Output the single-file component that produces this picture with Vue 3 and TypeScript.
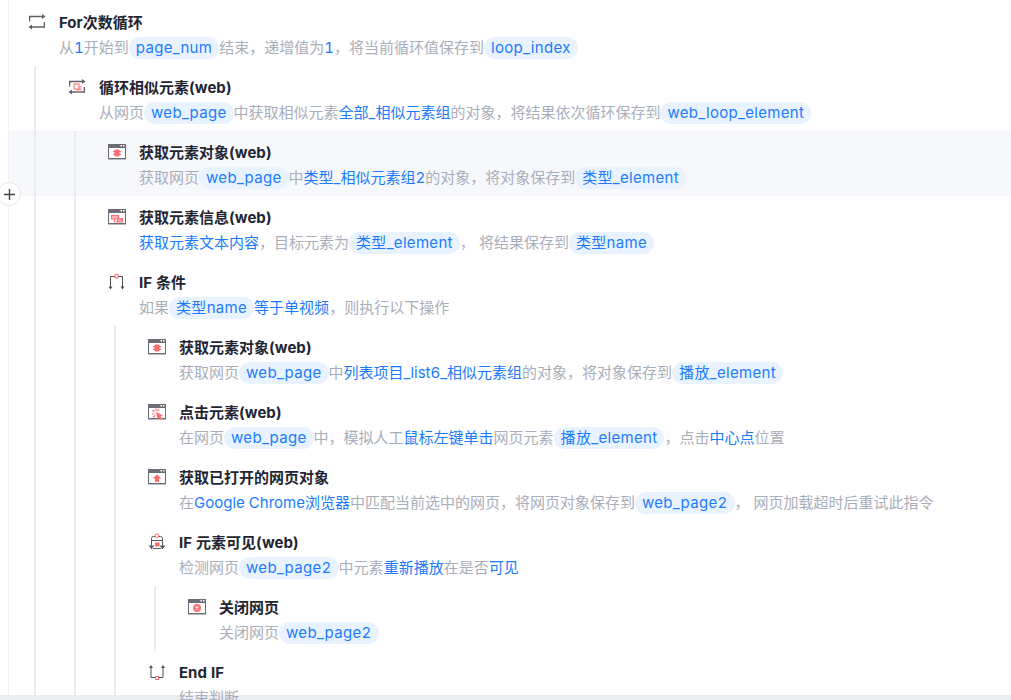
<script setup lang="ts">
// Flow steps of the automation, flattened; depth gives the guide lines.
type Part = { k: 't' | 'b' | 'c'; v: string }
type Row = { depth: number; icon: string; title: string; sub: Part[]; active?: boolean }

const t = (v: string): Part => ({ k: 't', v })
const b = (v: string): Part => ({ k: 'b', v })
const c = (v: string): Part => ({ k: 'c', v })

const rows: Row[] = [
  { depth: 0, icon: 'loop', title: 'For次数循环', sub: [t('从'), b('1'), t('开始到'), c('page_num'), t('结束，递增值为'), b('1'), t('，将当前循环值保存到'), c('loop_index')] },
  { depth: 1, icon: 'loopSimilar', title: '循环相似元素(web)', sub: [t('从网页'), c('web_page'), t('中获取相似元素'), b('全部_相似元素组'), t('的对象，将结果依次循环保存到'), c('web_loop_element')] },
  { depth: 2, icon: 'element', active: true, title: '获取元素对象(web)', sub: [t('获取网页'), c('web_page'), t('中'), b('类型_相似元素组2'), t('的对象，将对象保存到'), c('类型_element')] },
  { depth: 2, icon: 'info', title: '获取元素信息(web)', sub: [b('获取元素文本内容'), t('，目标元素为'), c('类型_element'), t('， 将结果保存到'), c('类型name')] },
  { depth: 2, icon: 'if', title: 'IF 条件', sub: [t('如果'), c('类型name'), b('等于单视频'), t('，则执行以下操作')] },
  { depth: 3, icon: 'element', title: '获取元素对象(web)', sub: [t('获取网页'), c('web_page'), t('中'), b('列表项目_list6_相似元素组'), t('的对象，将对象保存到'), c('播放_element')] },
  { depth: 3, icon: 'click', title: '点击元素(web)', sub: [t('在网页'), c('web_page'), t('中，模拟人工'), b('鼠标左键单击'), t('网页元素'), c('播放_element'), t('，点击'), b('中心点'), t('位置')] },
  { depth: 3, icon: 'page', title: '获取已打开的网页对象', sub: [t('在'), b('Google Chrome浏览器'), t('中匹配当前选中的网页，将网页对象保存到'), c('web_page2'), t('， 网页加载超时后重试此指令')] },
  { depth: 3, icon: 'ifVisible', title: 'IF 元素可见(web)', sub: [t('检测网页'), c('web_page2'), t('中元素'), b('重新播放'), t('在是否'), b('可见')] },
  { depth: 4, icon: 'close', title: '关闭网页', sub: [t('关闭网页'), c('web_page2')] },
  { depth: 3, icon: 'endIf', title: 'End IF', sub: [t('结束判断')] },
]

const windowIcons = ['element', 'info', 'click', 'page', 'close']
</script>

<template>
  <div class="page">
    <div class="flow">
      <div v-for="(row, i) in rows" :key="i" class="row" :class="{ active: row.active }">
        <span v-for="n in row.depth" :key="n" class="guide"></span>
        <svg class="icon" viewBox="0 0 18 18" width="18" height="18" aria-hidden="true">
          <g v-if="windowIcons.includes(row.icon)">
            <rect x="0" y="15.5" width="18" height="1.5" fill="#b9b9c2" />
            <rect x="0.5" y="1.5" width="17" height="14" fill="#fff" stroke="#6c6c76" />
            <rect x="0" y="1" width="18" height="4" fill="#6c6c76" />
            <rect x="12.5" y="2" width="1.5" height="1.5" fill="#fff" />
            <rect x="15" y="2" width="1.5" height="1.5" fill="#fff" />
          </g>
          <g v-if="row.icon === 'element'" fill="#ff6b6e">
            <rect x="6.5" y="6.5" width="5" height="7" rx="1" />
            <rect x="5" y="8" width="8" height="1.2" />
            <rect x="5" y="10.8" width="8" height="1.2" />
          </g>
          <g v-if="row.icon === 'info'" fill="#fdb3b4" stroke="#ff6b6e">
            <rect x="3.5" y="7.5" width="7" height="3.5" />
            <rect x="9.5" y="10.5" width="5" height="3.5" />
            <path d="M6.5 11v3h3" fill="none" />
          </g>
          <g v-if="row.icon === 'click'">
            <path d="M8 5.5v2.5M4.5 7l2 2M4 11h2.5M5 14.5l2-2M11 6l-1.5 2" stroke="#ff6b6e" stroke-width="1.2" fill="none" />
            <path d="M8 9l7 3.5-2.6 1 2.4 2.4-1.4 1.2-2.3-2.4-1.3 2.3z" fill="#ff6b6e" />
          </g>
          <path v-if="row.icon === 'page'" d="M9 6.5l4.5 4H11v3.5H7v-3.5H4.5z" fill="#ff6b6e" />
          <g v-if="row.icon === 'close'">
            <circle cx="9" cy="10" r="4" fill="#ff6b6e" />
            <path d="M7.4 8.4l3.2 3.2M10.6 8.4l-3.2 3.2" stroke="#fff" stroke-width="1.1" fill="none" />
          </g>
          <g v-if="row.icon === 'loop' || row.icon === 'loopSimilar'" fill="none" stroke="#5f6068" stroke-width="1.3">
            <path d="M1.6 8.5V3.5h13" />
            <path d="M16.4 9v5h-13" />
            <path d="M14 1l3.5 2.5L14 6z" fill="#5f6068" stroke="none" />
            <path d="M4 11.5L0.5 14 4 16.5z" fill="#5f6068" stroke="none" />
          </g>
          <g v-if="row.icon === 'loopSimilar'">
            <rect x="8" y="8" width="5.5" height="5.5" fill="#fdb3b4" />
            <rect x="6" y="6" width="5" height="5" fill="#fff" stroke="#ff6b6e" />
          </g>
          <g v-if="row.icon === 'if'">
            <path d="M7 3.5H2.5v11M10 3.5h4.5v11" fill="none" stroke="#4e4f57" />
            <path d="M0.5 13.5h4l-2 3zM12.5 13.5h4l-2 3z" fill="#4e4f57" />
            <rect x="7" y="1.5" width="3" height="3.5" fill="#fff" stroke="#ff6b6e" />
          </g>
          <g v-if="row.icon === 'ifVisible'">
            <path d="M7 3.5H5.5a2 2 0 0 0-2 2V16M11 3.5h1.5a2 2 0 0 1 2 2V16" fill="none" stroke="#55565e" />
            <path d="M3.5 7.5h11M5 15.5h8" fill="none" stroke="#55565e" stroke-width="1.2" />
            <path d="M0.5 12.5l3 3.5 3-3.5zM11.5 12.5l3 3.5 3-3.5z" fill="#55565e" />
            <rect x="7" y="9.5" width="4.5" height="4" fill="#ff6b6e" />
            <circle cx="9" cy="2.8" r="1.8" fill="#fff" stroke="#ff6b6e" />
          </g>
          <g v-if="row.icon === 'endIf'">
            <path d="M3 4v10.5h4.5M15 4v10.5h-4.5" fill="none" stroke="#4e4f57" />
            <path d="M1 5l2-3 2 3zM13 5l2-3 2 3z" fill="#4e4f57" />
            <rect x="7.5" y="13.5" width="3" height="3" fill="#fff" stroke="#ff6b6e" />
          </g>
        </svg>
        <div class="body">
          <div class="title">{{ row.title }}</div>
          <div class="sub">
            <span v-for="(p, j) in row.sub" :key="j" :class="p.k">{{ p.v }}</span>
          </div>
        </div>
        <button v-if="row.active" class="add" type="button" aria-label="添加">
          <svg viewBox="0 0 11 11" width="11" height="11"><path d="M5.5 0v11M0 5.5h11" stroke="#444" stroke-width="1.4" fill="none" /></svg>
        </button>
      </div>
    </div>
    <div class="scrollbar"></div>
  </div>
</template>

<style>
html, body { margin: 0; overflow: hidden; background: #fff; }
</style>

<style scoped>
.page {
  height: 700px;
  display: flex;
  flex-direction: column;
  overflow: hidden;
  font-family: Inter, "Noto Sans CJK SC", sans-serif;
  font-size: 15px;
  font-variant-numeric: tabular-nums;
}

.flow {
  flex: 1;
  min-height: 0;
  margin-left: 8px;
  padding-top: 1px;
  border-left: 1px solid #f0f1f4;
}

.row {
  position: relative;
  display: flex;
  height: 65px;
  padding-left: 19px;
  box-sizing: border-box;
}
.row.active { background: #f7f8fc; }

.guide {
  display: flex;
  flex: none;
  width: 40px;
  padding-left: 6px;
  box-sizing: border-box;
}
.guide::before {
  content: "";
  width: 2px;
  background: #ebecf0;
}

.icon {
  flex: none;
  margin-top: 12px;
  margin-right: 13px;
}

.body {
  padding-top: 10px;
  min-width: 0;
  white-space: nowrap;
}
.title {
  height: 24px;
  line-height: 24px;
  font-weight: 700;
  color: #1f2533;
}
.sub {
  height: 24px;
  line-height: 24px;
  margin-top: 1px;
  color: #a9aebb;
}
.b { color: #1a7bff; }
.c {
  display: inline-block;
  height: 22px;
  line-height: 22px;
  padding: 0 7px;
  border-radius: 11px;
  background: #e9f3ff;
  color: #1a7bff;
  letter-spacing: 0.32px;
}

.add {
  position: absolute;
  left: -12px;
  top: 51px;
  width: 24px;
  height: 24px;
  padding: 0;
  display: flex;
  align-items: center;
  justify-content: center;
  border: 1px solid #e3e4e8;
  border-radius: 50%;
  background: #fff;
}

.scrollbar {
  flex: none;
  height: 5px;
  background: #ebecf0;
}
</style>
